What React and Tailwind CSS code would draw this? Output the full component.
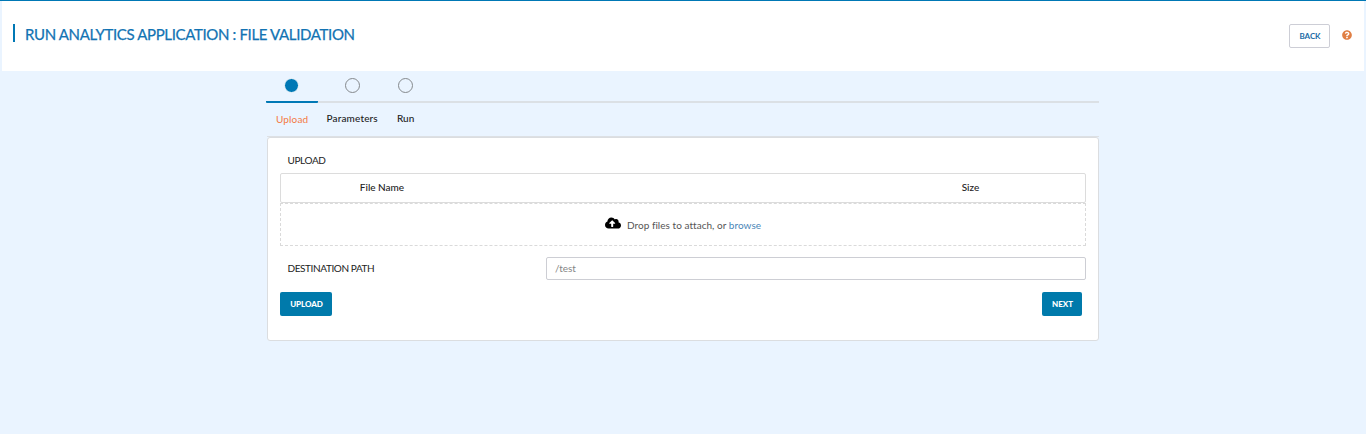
import React from "react";
import { FaCloudUploadAlt, FaQuestionCircle } from "react-icons/fa";

function Header() {
  return (
    <header className="mx-[2px] flex h-[70px] items-start bg-white pl-[11px] pr-[12px]">
      <div className="mt-[23px] h-[18px] w-[2px] bg-[#0078b5]" />
      <h1 className="ml-[10px] mt-[23px] whitespace-nowrap text-[15px] leading-[20px] tracking-[-0.35px] text-[#1273b3] [-webkit-text-stroke:0.25px_#1273b3]">
        RUN ANALYTICS APPLICATION : FILE VALIDATION
      </h1>
      <button className="ml-auto mt-[23px] h-[24px] w-[41px] rounded-[2px] border border-[#cdced6] pl-px text-[8px] font-bold leading-[22px] tracking-[-0.1px] text-[#1c6ca6]">
        BACK
      </button>
      <FaQuestionCircle className="ml-[12px] mt-[29px] size-[10px] text-[#e07f45]" />
    </header>
  );
}

function Steps() {
  return (
    <nav className="-ml-px h-[65px] w-[833px] text-[10px] leading-[14px] text-[#222]">
      <div className="flex h-[32px] items-start border-b-2 border-[#dbe0e5]">
        <div className="flex h-[32px] w-[52px] rounded-b-[1px] border-b-2 border-[#0078b5] pl-[18px] pt-[7px]">
          <span className="size-[15px] rounded-full border border-[#f4f8fb] bg-[#0078b5]" />
        </div>
        <span className="ml-[27px] mt-[7px] size-[15px] rounded-full border border-[#85898d]" />
        <span className="ml-[38px] mt-[7px] size-[15px] rounded-full border border-[#85898d]" />
      </div>
      <div className="flex whitespace-nowrap pt-[8px]">
        <span className="ml-[10px] mt-px w-[50px] tracking-[0.15px] text-[#f47a42]">Upload</span>
        <span className="w-[71px] pl-[0.5px] font-medium tracking-[0.15px]">Parameters</span>
        <span className="font-medium">Run</span>
      </div>
    </nav>
  );
}

export default function App() {
  return (
    <div className="h-[434px] w-[1366px] overflow-hidden border-t border-[#0078b5] bg-[#eaf4ff] font-[Lato,sans-serif]">
      <Header />
      <main className="ml-[267px] w-[832px]">
        <Steps />
        <div className="h-px bg-[#dde0e4]" />
        <section className="h-[204px] rounded-[3px] border border-[#dbdde0] bg-white px-[12px] pt-[15px]">
          <h2 className="h-[20px] pl-[7.5px] text-[10px] leading-[14px] tracking-[-0.4px] text-[#222]">UPLOAD</h2>
          <div className="flex h-[30px] rounded-[2px] border border-[#dcdcdc] text-[10px] font-medium leading-[27px] text-[#222]">
            <span className="w-[202px] text-center">File Name</span>
            <span className="ml-auto w-[229px] text-center">Size</span>
          </div>
          <div className="flex h-[43px] items-center justify-center whitespace-nowrap border border-dashed border-[#dadada] text-[10px] text-[#555]">
            <FaCloudUploadAlt className="mb-[3px] mr-[6px] size-[16px] text-black" />
            <span className="mt-px tracking-[0.04px]">
              Drop files to attach, or <a className="text-[#4a86b8]">browse</a>
            </span>
          </div>
          <div className="mt-[11px] flex h-[23px] items-center">
            <label className="w-[266px] pl-[7.5px] text-[10px] tracking-[-0.4px] text-[#222]">DESTINATION PATH</label>
            <div className="h-[23px] w-[540px] rounded-[2px] border border-[#cdced4] pl-[8px] text-[10px] leading-[21px] tracking-[-0.1px] text-[#858585]">
              /test
            </div>
          </div>
          <div className="mt-[12px] flex justify-between pr-[4px] text-[8px] font-black leading-[24px] tracking-[-0.05px] text-white">
            <button className="h-[24px] w-[52px] rounded-[2px] bg-[#007aab] pl-px">UPLOAD</button>
            <button className="h-[24px] w-[40px] rounded-[2px] bg-[#007aab] pl-px">NEXT</button>
          </div>
        </section>
      </main>
    </div>
  );
}
